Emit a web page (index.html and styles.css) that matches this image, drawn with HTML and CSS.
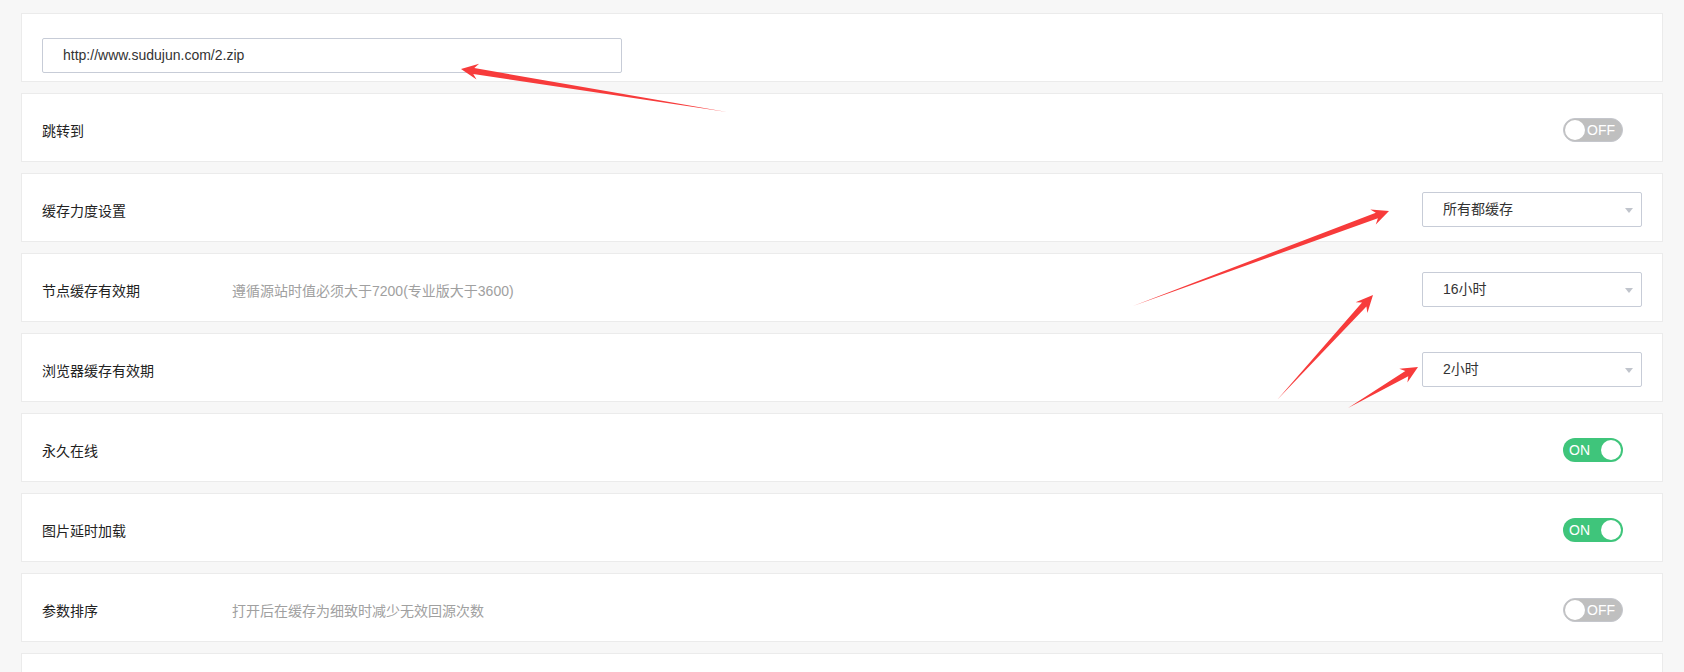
FILE: index.html
```html
<!DOCTYPE html>
<html lang="zh-CN">
<head>
<meta charset="utf-8">
<title>设置</title>
<link rel="stylesheet" href="styles.css">
</head>
<body>
<div class="page">
  <div class="card card-input">
    <div class="text-input">http://www.sudujun.com/2.zip</div>
  </div>
  <div class="card row">
    <span class="label">跳转到</span>
    <span class="desc"></span>
    <span class="toggle off"><span class="knob"></span><span class="toggle-text">OFF</span></span>
  </div>
  <div class="card row">
    <span class="label">缓存力度设置</span>
    <span class="desc"></span>
    <span class="select">所有都缓存<span class="caret"></span></span>
  </div>
  <div class="card row">
    <span class="label">节点缓存有效期</span>
    <span class="desc">遵循源站时值必须大于7200(专业版大于3600)</span>
    <span class="select">16小时<span class="caret"></span></span>
  </div>
  <div class="card row">
    <span class="label">浏览器缓存有效期</span>
    <span class="desc"></span>
    <span class="select">2小时<span class="caret"></span></span>
  </div>
  <div class="card row">
    <span class="label">永久在线</span>
    <span class="desc"></span>
    <span class="toggle on"><span class="toggle-text">ON</span><span class="knob"></span></span>
  </div>
  <div class="card row">
    <span class="label">图片延时加载</span>
    <span class="desc"></span>
    <span class="toggle on"><span class="toggle-text">ON</span><span class="knob"></span></span>
  </div>
  <div class="card row">
    <span class="label">参数排序</span>
    <span class="desc">打开后在缓存为细致时减少无效回源次数</span>
    <span class="toggle off"><span class="knob"></span><span class="toggle-text">OFF</span></span>
  </div>
  <div class="card row"></div>
</div>
<svg class="arrows" width="1684" height="672" viewBox="0 0 1684 672">
  <polygon points="727,112 474.3,68.1 479.1,63.8 461,69 476.5,79.6 473.3,74.1"/>
  <polygon points="1133,306 1375.8,212.7 1370.3,209.4 1389,211 1375.8,224.4 1377.9,218.3"/>
  <polygon points="1277,400 1362,302.6 1355.6,302.2 1373,295 1367.4,313 1366.4,306.6"/>
  <polygon points="1348,408 1405.3,371 1399.3,368.7 1418,367 1407.4,382.5 1408.3,376.2"/>
</svg>
</body>
</html>
```
FILE: styles.css
```css
html, body {
  margin: 0;
  padding: 0;
}
body {
  background: #f7f7f7;
  font-family: "Liberation Sans", "Noto Sans CJK SC", sans-serif;
  font-size: 14px;
  color: #333;
  overflow: hidden;
  height: 672px;
}
.page {
  padding: 13px 21px 0;
  display: flex;
  flex-direction: column;
  gap: 11px;
}
.card {
  background: #fff;
  border: 1px solid #ebebeb;
  height: 69px;
  box-sizing: border-box;
  flex: none;
}
.card-input {
  padding: 24px 20px 0;
}
.text-input {
  width: 580px;
  height: 35px;
  box-sizing: border-box;
  border: 1px solid #c7ccd7;
  border-radius: 2px;
  padding: 0 20px;
  line-height: 33px;
  color: #333;
}
.row {
  display: flex;
  align-items: center;
  padding: 4px 20px 0 20px;
}
.label {
  width: 190px;
  flex: none;
  color: #222;
}
.desc {
  flex: 1;
  color: #a0a0a0;
}
.select {
  position: relative;
  width: 220px;
  height: 35px;
  box-sizing: border-box;
  border: 1px solid #c7ccd7;
  border-radius: 2px;
  padding: 0 20px;
  line-height: 33px;
  color: #333;
  flex: none;
}
.caret {
  position: absolute;
  right: 8px;
  top: 15px;
  width: 0;
  height: 0;
  border-left: 4px solid transparent;
  border-right: 4px solid transparent;
  border-top: 5px solid #c0c4cc;
}
.toggle {
  flex: none;
  margin-right: 19px;
  width: 60px;
  height: 24px;
  box-sizing: border-box;
  border-radius: 12px;
  display: flex;
  align-items: center;
  padding: 0 2px;
  color: #fff;
  font-size: 14px;
}
.toggle.on {
  background: #3fc57b;
  justify-content: space-between;
  padding-left: 6px;
}
.toggle.off {
  background: #bfbfbf;
  border: 1px solid #c4c6cc;
  padding: 0 1px;
}
.knob {
  width: 20px;
  height: 20px;
  border-radius: 50%;
  background: #fff;
  flex: none;
}
.toggle.off .toggle-text {
  margin-left: 2px;
}
.arrows {
  position: absolute;
  left: 0;
  top: 0;
  pointer-events: none;
}
.arrows polygon {
  fill: #f73b3b;
}
```
